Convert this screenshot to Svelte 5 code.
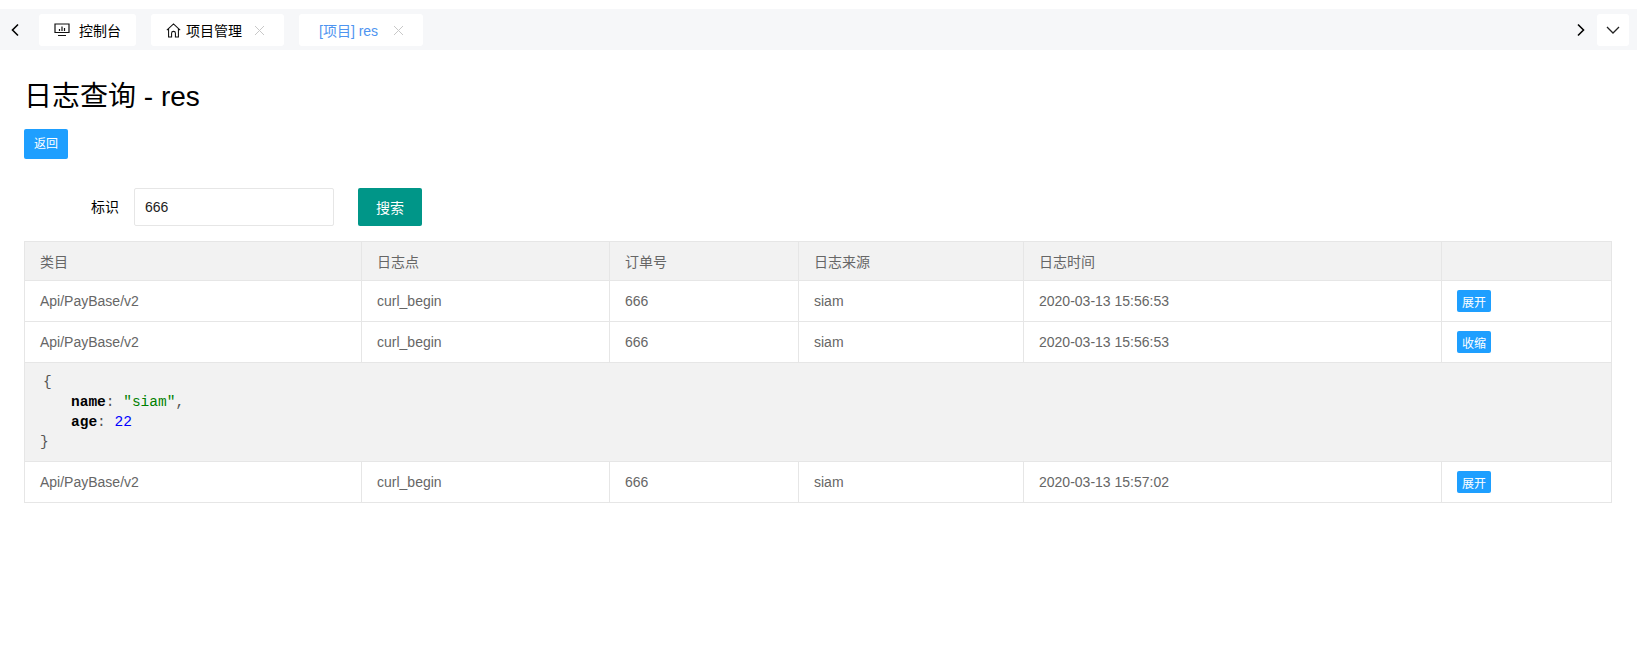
<script>
  const rows = [
    { time: '2020-03-13 15:56:53', label: '展开' },
    { time: '2020-03-13 15:56:53', label: '收缩', open: true },
    { time: '2020-03-13 15:57:02', label: '展开' }
  ];
</script>

<div class="page">
  <div class="tabs">
    <button class="nav nav-left" aria-label="左">
      <svg width="10" height="14" viewBox="0 0 10 14"><path d="M8 1.5 2.5 7 8 12.5" /></svg>
    </button>
    <div class="tab tab-home">
      <svg class="ico mon" width="16" height="14" viewBox="0 0 16 14">
        <path d="M1 1h14v8.5H1z" />
        <path d="M5.5 8V6M8 8V3.5M10.5 8V5M4 12.5h8" />
      </svg>
      <span class="t1">控制台</span>
    </div>
    <div class="tab tab-proj">
      <svg class="ico" width="15" height="15" viewBox="0 0 14 14">
        <path d="M.8 6.6 7 .9l6.2 5.7M2.4 5.4V13h2.8V9.6a1.8 1.8 0 0 1 3.6 0V13h2.8V5.4" />
      </svg>
      <span class="t2">项目管理</span>
      <svg class="close" width="11" height="11" viewBox="0 0 11 11"><path d="M1 1l9 9M10 1l-9 9" /></svg>
    </div>
    <div class="tab tab-res">
      <span class="active">[项目] res</span>
      <svg class="close" width="11" height="11" viewBox="0 0 11 11"><path d="M1 1l9 9M10 1l-9 9" /></svg>
    </div>
    <div class="spacer"></div>
    <button class="nav nav-right" aria-label="右">
      <svg width="10" height="14" viewBox="0 0 10 14"><path d="M2 1.5 7.5 7 2 12.5" /></svg>
    </button>
    <button class="tab more" aria-label="更多">
      <svg width="14" height="9" viewBox="0 0 14 9"><path d="M1 1l6 6 6-6" /></svg>
    </button>
  </div>

  <main class="content">
    <h1>日志查询 - res</h1>
    <button class="back">返回</button>

    <div class="form">
      <label for="ident">标识</label>
      <input id="ident" value="666" />
      <button class="search">搜索</button>
    </div>

    <table>
      <colgroup>
        <col class="c1" /><col class="c2" /><col class="c3" /><col class="c4" /><col class="c5" /><col />
      </colgroup>
      <thead>
        <tr><th>类目</th><th>日志点</th><th>订单号</th><th>日志来源</th><th>日志时间</th><th></th></tr>
      </thead>
      <tbody>
        {#each rows as r}
          <tr>
            <td>Api/PayBase/v2</td>
            <td>curl_begin</td>
            <td>666</td>
            <td>siam</td>
            <td>{r.time}</td>
            <td><button class="xs">{r.label}</button></td>
          </tr>
          {#if r.open}
            <tr class="json-row">
              <td colspan="6">
                <div class="json">
                  <div class="brace-open">&#123;</div>
                  <div class="prop"><b>name</b>: <span class="str">"siam"</span>,</div>
                  <div class="prop"><b>age</b>: <span class="num">22</span></div>
                  <div>&#125;</div>
                </div>
              </td>
            </tr>
          {/if}
        {/each}
      </tbody>
    </table>
  </main>
</div>

<style>
  :global(body) {
    margin: 0;
    background: #fff;
    font-family: "Liberation Sans", "Noto Sans CJK SC", sans-serif;
    font-size: 14px;
    color: #000;
  }
  button { font: inherit; border: 0; cursor: pointer; padding: 0; }
  svg path { fill: none; stroke: currentColor; }
  .page { padding-top: 9px; }
  .tabs {
    display: flex;
    align-items: center;
    height: 41px;
    box-sizing: border-box;
    background: #f6f7f9;
    padding: 5px 8px 4px 0;
  }
  .nav { background: none; display: flex; align-items: center; justify-content: center; color: #000; }
  .nav svg path { stroke-width: 1.6; }
  .nav-left { width: 39px; padding-right: 9px; box-sizing: border-box; }
  .nav-right { width: 10px; margin: 0 11px 0 1px; }
  .tab {
    display: flex;
    align-items: center;
    height: 32px;
    background: #fff;
    border-radius: 3px;
    box-sizing: border-box;
  }
  .tab-home { width: 97px; padding-left: 15px; margin-right: 15px; }
  .tab-proj { width: 133px; padding-left: 15px; margin-right: 15px; }
  .tab-res { width: 124px; padding-left: 20px; }
  .spacer { flex: 1; }
  .ico { flex: none; color: #111; }
  .mon path { stroke-width: 1.2; }
  .t1 { margin-left: 9px; }
  .t2 { margin-left: 5px; }
  .active { color: #4e94f0; }
  .close { color: #c8c8c8; flex: none; }
  .tab-proj .close { margin-left: 12px; }
  .tab-res .close { margin-left: 15px; }
  .more { width: 32px; justify-content: center; color: #222; }
  .more svg path { stroke-width: 1.3; }

  .content { padding: 0 25px 0 24px; }
  h1 {
    margin: 30px 0 0;
    font-size: 28px;
    font-weight: 400;
    line-height: 34px;
  }
  .back {
    display: block;
    margin-top: 15px;
    width: 44px;
    height: 30px;
    padding-bottom: 3px;
    background: #1e9fff;
    color: #fff;
    font-size: 12px;
    border-radius: 2px;
  }
  .form {
    display: flex;
    align-items: center;
    margin-top: 29px;
    height: 38px;
  }
  label { margin-left: 67px; width: 43px; line-height: 20px; }
  input {
    box-sizing: border-box;
    width: 200px;
    height: 38px;
    border: 1px solid #e6e6e6;
    border-radius: 2px;
    padding: 0 10px;
    font: inherit;
    color: #222;
    outline: none;
  }
  .search {
    margin-left: 24px;
    width: 64px;
    height: 38px;
    background: #009688;
    color: #fff;
    border-radius: 2px;
  }
  table {
    margin-top: 15px;
    width: 1588px;
    table-layout: fixed;
    border-collapse: separate;
    border-spacing: 0;
    border-top: 1px solid #e6e6e6;
    border-left: 1px solid #e6e6e6;
    color: #666;
  }
  .c1 { width: 337px; }
  .c2 { width: 248px; }
  .c3 { width: 189px; }
  .c4 { width: 225px; }
  .c5 { width: 418px; }
  th, td {
    border-right: 1px solid #e6e6e6;
    border-bottom: 1px solid #e6e6e6;
    padding: 0 15px;
    text-align: left;
    font-weight: 400;
    box-sizing: border-box;
  }
  thead tr { background: #f2f2f2; }
  th { height: 39px; }
  td { height: 41px; }
  .xs {
    display: block;
    height: 22px;
    width: 34px;
    background: #1e9fff;
    color: #fff;
    font-size: 12px;
    border-radius: 2px;
  }
  .json-row td { background: #f2f2f2; height: 99px; }
  .json {
    font-family: "Liberation Mono", monospace;
    font-size: 14.5px;
    line-height: 20px;
    color: #555;
  }
  .brace-open { padding-left: 3px; }
  .prop { padding-left: 31px; }
  .json b { color: #000; }
  .str { color: green; }
  .num { color: #00f; }
</style>
